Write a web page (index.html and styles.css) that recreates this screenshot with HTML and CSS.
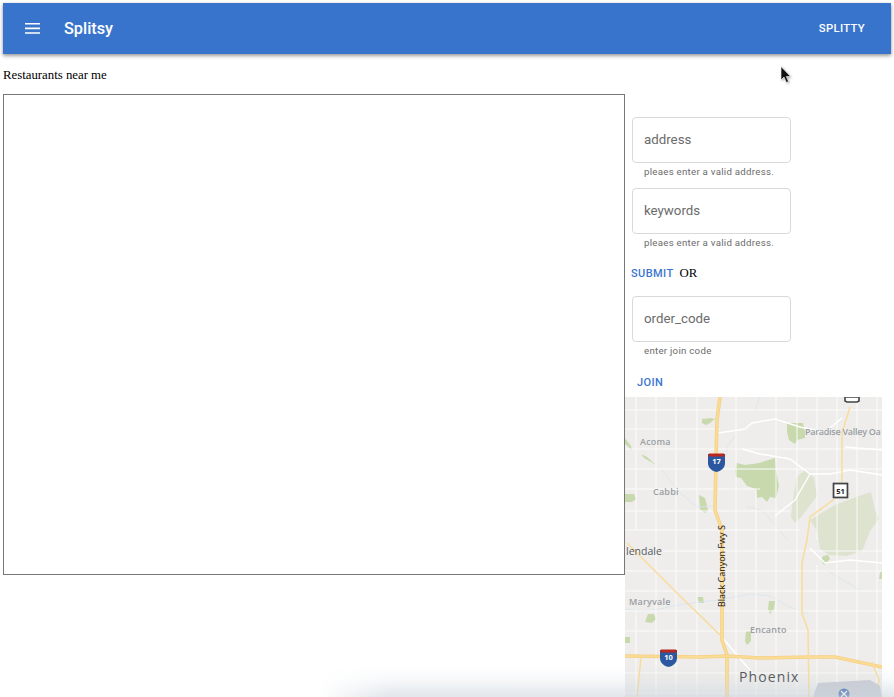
FILE: index.html
```html
<!DOCTYPE html>
<html lang="en">
<head>
<meta charset="utf-8">
<title>Splitsy</title>
<link rel="stylesheet" href="styles.css">
</head>
<body>
<header class="appbar">
  <button class="menu-btn" aria-label="menu">
    <svg width="16" height="11" viewBox="0 0 16 11"><path d="M1 0h15v1.600H1zM1 4.600h15v1.600H1zM1 9.200h15v1.600H1z" fill="#fff"/></svg>
  </button>
  <h1 class="brand">Splitsy</h1>
  <button class="appbar-action">SPLITTY</button>
</header>
<p class="page-title">Restaurants near me</p>
<main class="layout">
  <div class="results"></div>
  <aside class="side">
    <form class="search">
      <div class="field"><div class="field-box">address</div><div class="helper">pleaes enter a valid address.</div></div>
      <div class="field"><div class="field-box">keywords</div><div class="helper">pleaes enter a valid address.</div></div>
      <div class="actions"><span class="text-btn">SUBMIT</span><span class="or">OR</span></div>
      <div class="field"><div class="field-box">order_code</div><div class="helper">enter join code</div></div>
      <div class="join"><span class="text-btn">JOIN</span></div>
    </form>
    <svg class="map" viewBox="625 397 257 300" width="257" height="300">
      <rect x="625" y="397" width="257" height="300" fill="#eeedeb"/>
      <!-- parks -->
      <path class="park" d="M737 463l8 2 14-2 16-5 1 12 3 16-3 12-6-1-3 5-5-5-5 1-1-9-9-3-6-8-5-1-1-7z"/>
      <path class="park" d="M787 423h16l2 9v6l-8 2-2 4-6-4-2-8z"/>
      <path class="park-pale" d="M797 477l8-7 9 8 3 18-6 8-10 13-6 6-4-6 2-18z"/>
      <path class="park-pale" d="M810 520l25-15 24-9 12-4 4 18 4 9-9 12-8 20-15 5-18-1-9-6-3-18z"/>
      <path class="park" d="M625 494h9l2 5-4 3h-7zM699 495l6 3 3 12-3 3-5-4zM702 419l9-1 4 1-5 4-4 2-4-2zM625 438l6 8 1 4-7-6zM641 454l6 3 9 8-12-7zM625 637h5v6h-5zM648 614h6l2 5-4 4-7-1zM697 597h6l1 6h-5zM769 601h6l-1 8-4 5-2-5zM746 631h5v10l-4 4-2-4zM880 573l2-3v9h-3zM823 556l5-1 2 4-6 6-3-5zM845 487h2l3 8-3 1z"/>
      <!-- water -->
      <path class="water" d="M625 609l15 2 20-2 12-3 28-4 18-2 16-3 17-3 20 2 16 10 22 8M662 470l18 23 18 14 18-1M735 436l-8 10-1 10M760 397l-5 14M762 510l12 14 14 16M826 570l34 20M746 506l15 4"/>
      <!-- streets -->
      <path class="street" d="M636 397V530M656 397V697M676 397V697M697 397V697M736 397V697M756 490V697M776 397V697M797 397V697M817 397V540M817 565V697M837 397V697M857 397V697M877 397V697M636 610V697"/>
      <path class="street" d="M625 410H882M625 429H720M625 449H882M625 469H882M625 489H760M625 511H790M625 530H800M625 551H882M625 571H882M625 591H882M625 611H882M625 631H882M625 673H882M625 693H882"/>
      <path class="street-major" d="M718 433L745 429 752 423 775 419 800 427 825 432 842 418M742 449L760 454 790 459 810 474 830 474 850 470 882 475M810 474L795 500 775 516M845 447L882 450M810 548L825 563 850 560 882 563M720 635L755 676"/>
      <!-- freeways -->
      <path class="fwy-outer" d="M720 397L717 420 716 460 715 510 722 530 722 600 722 640 727 655 727 697"/>
      <path class="fwy" d="M720 397L717 420 716 460 715 510 722 530 722 600 722 640 727 655 727 697"/>
      <path class="fwy-outer" d="M625 656L700 657 727 656 760 658 810 657 835 657 882 667"/>
      <path class="fwy" d="M625 656L700 657 727 656 760 658 810 657 835 657 882 667"/>
      <path class="fwy-thin" d="M627 543L680 596 720 635"/>
      <path class="fwy-thin" d="M850 407L842 433 842 483 833 500 810 517 807 540 802 563 802 613 808 630 809 697"/>
      <path class="fwy-thin" d="M641 658L637 697M872 662L879 680 875 697"/>
      <!-- airport -->
      <path class="airport" d="M818 683L870 680 880 686 882 697H813z"/>
      <circle cx="844" cy="694" r="5.500" fill="#2f5fa5"/>
      <path d="M841 691l6 6M847 691l-6 6" stroke="#fff" stroke-width="1.300"/>
      <!-- shields -->
      <path d="M845 397h14v4l-2 1h-10l-2-1z" fill="#fff" stroke="#444" stroke-width="1.600"/>
      <g>
        <rect x="832" y="482" width="17" height="17" fill="#fff"/>
        <rect x="833.500" y="483.500" width="14" height="14" fill="#fff" stroke="#444" stroke-width="1.800"/>
        <text class="shield-dark" x="840.500" y="494">51</text>
      </g>
      <g>
        <path d="M708 454h17v9c0 5-4 8-8.500 9-4.500-1-8.500-4-8.500-9z" fill="#2b57a0"/>
        <path d="M708 456.500l1-3h15l1 3z" fill="#b8281f"/>
        <text class="shield-light" x="716.500" y="464">17</text>
      </g>
      <g>
        <path d="M660 650h17v8c0 5-4 8-8.500 9-4.500-1-8.500-4-8.500-9z" fill="#2b57a0"/>
        <path d="M660 652.500l1-3h15l1 3z" fill="#b8281f"/>
        <text class="shield-light" x="668.500" y="660">10</text>
      </g>
      <!-- labels -->
      <text class="label" x="640" y="445">Acoma</text>
      <text class="label" x="653" y="495">Cabbi</text>
      <text class="label" x="805" y="435" textLength="76">Paradise Valley Oa</text>
      <text class="label-dark" x="626" y="555">lendale</text>
      <text class="label" x="629" y="605">Maryvale</text>
      <text class="label" x="750" y="633">Encanto</text>
      <text class="city" x="739" y="682">Phoenix</text>
      <text class="road-name" transform="translate(725 607) rotate(-90)">Black Canyon Fwy S</text>
    </svg>
  </aside>
</main>
<div class="bottom-fade"></div>
<svg class="cursor" width="12" height="18" viewBox="0 0 12 18"><path d="M1 0.500V14l3-3 2.300 5.500 2.200-1L6.300 10.500H10.500z" fill="#111" stroke="#fff" stroke-width=".6"/></svg>
</body>
</html>
```
FILE: styles.css
```css
html, body {
  height: 697px;
  overflow: hidden;
}
body {
  margin: 0;
  padding: 3px 3px 0;
  box-sizing: border-box;
  font-family: "Liberation Serif", serif;
  font-size: 12.800px;
  color: #000;
  background: #fff;
  position: relative;
}
button {
  border: 0;
  background: none;
  padding: 0;
  color: inherit;
  font: inherit;
}
.appbar {
  display: flex;
  align-items: center;
  width: 888px;
  height: 51px;
  background: #3874cb;
  color: #fff;
  font-family: Roboto, sans-serif;
  box-shadow: 0 2px 4px rgba(0,0,0,.3), 0 1px 3px rgba(0,0,0,.18);
  padding: 0 26px 0 21px;
  box-sizing: border-box;
}
.menu-btn {
  display: flex;
  width: 40px;
}
.brand {
  flex: 1;
  margin: 0;
  font-size: 16.300px;
  font-weight: 500;
}
.appbar-action {
  font-size: 11.300px;
  font-weight: 500;
  letter-spacing: .3px;
}
.page-title {
  margin: 0;
  height: 40px;
  line-height: 42px;
}
.layout {
  display: flex;
  height: 600px;
}
.results {
  width: 622px;
  height: 481px;
  border: 1px solid #777;
  box-sizing: border-box;
  flex: none;
}
.side {
  width: 257px;
  flex: none;
  font-family: Roboto, sans-serif;
}
.search {
  height: 303px;
  padding: 23px 0 0 7px;
  box-sizing: border-box;
}
.field {
  width: 159px;
  margin-bottom: 9.500px;
}
.field-box {
  height: 46px;
  box-sizing: border-box;
  border: 1px solid #d9d9d9;
  border-radius: 4px;
  padding: 0 11px;
  line-height: 43px;
  font-size: 13.300px;
  color: #6b6b6b;
}
.helper {
  padding: 3px 0 0 12px;
  font-size: 9.700px;
  line-height: 12px;
  letter-spacing: .26px;
  white-space: nowrap;
  color: #6b6b6b;
}
.actions {
  display: flex;
  align-items: center;
  height: 24px;
  margin: 12.500px 0 11px -1px;
}
.text-btn {
  font-size: 11px;
  font-weight: 500;
  letter-spacing: .4px;
  color: #3a76cf;
}
.or {
  margin-left: 6px;
  font-family: "Liberation Serif", serif;
  font-size: 12.800px;
  color: #000;
}
.join {
  margin: 17px 0 0 5px;
}
.map {
  display: block;
}
.park { fill: #c8d9ae; }
.park-pale { fill: #dde3cf; }
.water { fill: none; stroke: #d8e5ee; stroke-width: .8; }
.street { fill: none; stroke: #fbfbfa; stroke-width: 1; }
.street-major { fill: none; stroke: #fff; stroke-width: 1.400; }
.fwy-outer { fill: none; stroke: #f5cf85; stroke-width: 3.600; }
.fwy { fill: none; stroke: #fbdc94; stroke-width: 2; }
.fwy-thin { fill: none; stroke: #f9dc9c; stroke-width: 1.500; }
.airport { fill: #c9cbd3; }
.label, .label-dark, .city, .road-name, .shield-dark, .shield-light {
  font-family: "Open Sans", sans-serif;
}
.label {
  font-size: 9px;
  font-weight: 600;
  fill: #9a9ea3;
  letter-spacing: .2px;
}
.label-dark {
  font-size: 10.500px;
  fill: #55595d;
}
.city {
  font-size: 14px;
  fill: #4a4d50;
  letter-spacing: 1.100px;
}
.road-name {
  font-size: 9px;
  fill: #111;
}
.shield-dark, .shield-light {
  font-size: 7.500px;
  font-weight: 700;
  text-anchor: middle;
}
.shield-dark { fill: #222; }
.shield-light { fill: #fff; }
.bottom-fade {
  position: absolute;
  left: 318px;
  right: 0;
  bottom: 0;
  height: 32px;
  background: linear-gradient(to bottom, rgba(205,214,222,0), rgba(205,214,222,.14) 45%, rgba(205,214,222,.6));
  -webkit-mask-image: linear-gradient(to right, transparent, #000 70px);
  mask-image: linear-gradient(to right, transparent, #000 70px);
  pointer-events: none;
}
.cursor {
  position: absolute;
  left: 780px;
  top: 66px;
  filter: drop-shadow(1px 1px 1px rgba(0,0,0,.3));
}
```
